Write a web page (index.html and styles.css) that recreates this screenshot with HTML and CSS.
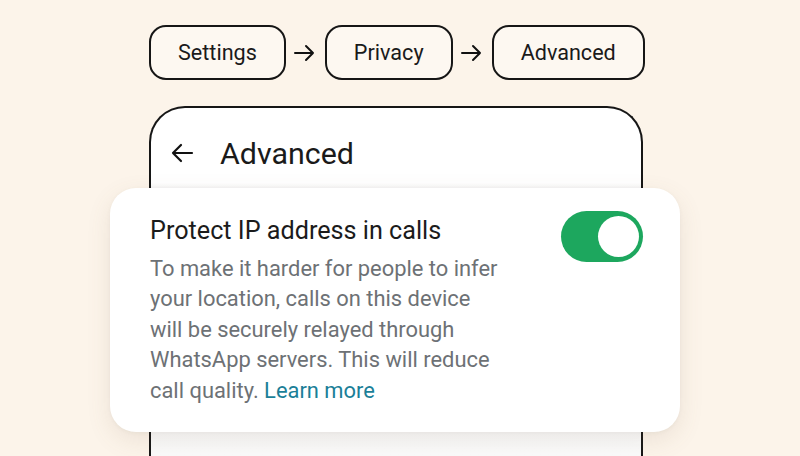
FILE: index.html
```html
<!DOCTYPE html>
<html>
<head>
<meta charset="utf-8">
<link rel="stylesheet" href="styles.css">
</head>
<body>
<div class="stage">
  <nav class="crumbs">
    <span class="pill">Settings</span>
    <svg class="arr" width="25" height="20" viewBox="0 0 25 20"><path d="M3 10H21M14 3L21 10L14 17" fill="none" stroke="#111" stroke-width="2" stroke-linecap="round" stroke-linejoin="round"/></svg>
    <span class="pill">Privacy</span>
    <svg class="arr" width="25" height="20" viewBox="0 0 25 20"><path d="M3 10H21M14 3L21 10L14 17" fill="none" stroke="#111" stroke-width="2" stroke-linecap="round" stroke-linejoin="round"/></svg>
    <span class="pill">Advanced</span>
  </nav>
  <div class="phone">
    <header class="bar">
      <svg class="back" width="24" height="24" viewBox="0 0 24 24"><path d="M22 12H3M11 4L3 12L11 20" fill="none" stroke="#111" stroke-width="2.2" stroke-linecap="round" stroke-linejoin="round"/></svg>
      <span class="title">Advanced</span>
    </header>
    <div class="card">
      <div class="text">
        <div class="h">Protect IP address in calls</div>
        <p class="desc">To make it harder for people to infer<br>your location, calls on this device<br>will be securely relayed through<br>WhatsApp servers. This will reduce<br>call quality. <span class="link">Learn more</span></p>
      </div>
      <div class="toggle"><span class="knob"></span></div>
    </div>
  </div>
</div>
</body>
</html>
```
FILE: styles.css
```css
* { box-sizing: border-box; }
html, body { margin: 0; padding: 0; }
body {
  background: #fcf4ea;
  font-family: Roboto, "Noto Sans", sans-serif;
  width: 800px;
  height: 456px;
  overflow: hidden;
}
.stage {
  display: flex;
  flex-direction: column;
  padding: 25px 0 0 149px;
}
.crumbs {
  display: flex;
  align-items: center;
  gap: 6px;
}
.crumbs .arr { margin-right: 2px; }
.pill {
  height: 55px;
  display: flex;
  align-items: center;
  padding: 0 27px;
  border: 2px solid #161616;
  border-radius: 17px;
  background: #fdf8f1;
  font-size: 21.6px;
  color: #1a1a1a;
}
.phone {
  margin-top: 26px;
  width: 494px;
  height: 350px;
  border: 2px solid #161616;
  border-bottom: none;
  border-radius: 36px 36px 0 0;
  background: linear-gradient(#fff 0, #fff 75px, #f6f6f6 80px, #fafafa 100%);
}
.bar {
  height: 78px;
  display: flex;
  align-items: center;
  padding: 12px 0 0 19px;
}
.back { margin-right: 26px; }
.title {
  font-size: 30.4px;
  color: #1a1a1a;
}
.card {
  margin: 2px -39px 0 -41px;
  height: 244px;
  background: #fff;
  border-radius: 26px;
  box-shadow: 0 8px 24px rgba(120, 100, 70, 0.12), 0 1px 4px rgba(0,0,0,0.04);
  display: flex;
  justify-content: space-between;
  padding: 23px 37px 0 40px;
}
.text { padding-top: 5px; }
.h {
  font-size: 25.2px;
  color: #1b1b1b;
  line-height: 30px;
}
.desc {
  margin: 8px 0 0;
  font-size: 21.9px;
  line-height: 30.4px;
  color: #6d7175;
  white-space: nowrap;
}
.link { color: #1b7f98; }
.toggle {
  width: 82px;
  height: 51px;
  border-radius: 26px;
  background: #1da75e;
  display: flex;
  align-items: center;
  justify-content: flex-end;
  padding-right: 4px;
}
.knob {
  width: 41px;
  height: 41px;
  border-radius: 50%;
  background: #fff;
}
```
